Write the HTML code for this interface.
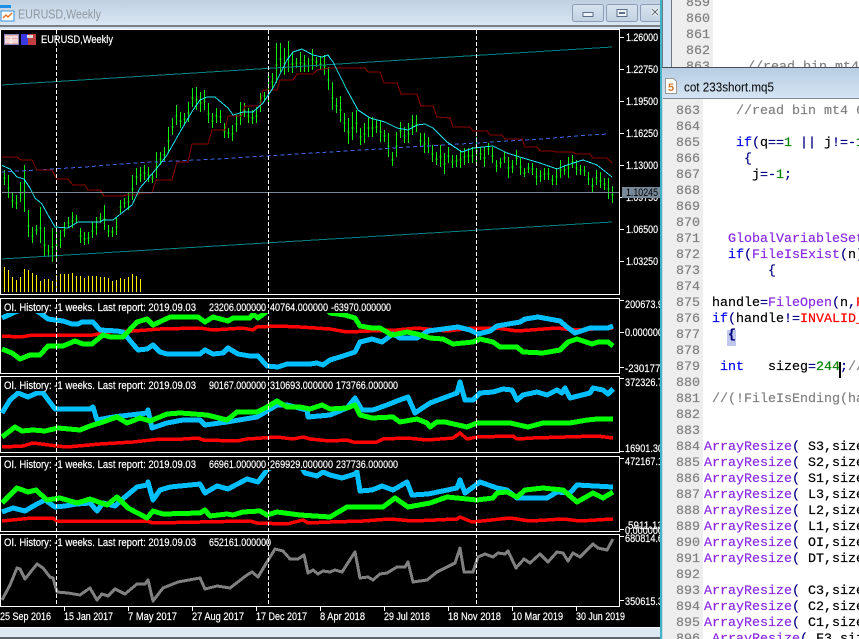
<!DOCTYPE html>
<html><head><meta charset="utf-8"><style>
html,body{margin:0;padding:0;background:#000;overflow:hidden}
svg{display:block}
.l{font-family:"Liberation Sans",sans-serif;font-size:11px;fill:#fff;stroke:#fff;stroke-width:.2}
.m{font-family:"Liberation Mono",monospace;font-size:13.33px;white-space:pre}
.n{fill:#808080;stroke:#808080;stroke-width:.2}.k{fill:#0000ff;stroke:#0000ff;stroke-width:.2}.f{fill:#8a2be2;stroke:#8a2be2;stroke-width:.2}.r{fill:#ff0000;stroke:#ff0000;stroke-width:.2}.g{fill:#008000;stroke:#008000;stroke-width:.2}.p{fill:#000080;stroke:#000080;stroke-width:.2}.b{fill:#000;stroke:#000;stroke-width:.2}
</style></head><body>
<svg width="859" height="639" viewBox="0 0 859 639" xmlns="http://www.w3.org/2000/svg">
<defs>
<linearGradient id="tb" x1="0" y1="0" x2="0" y2="1"><stop offset="0" stop-color="#bfd0e1"/><stop offset="1" stop-color="#d9e6f3"/></linearGradient>
<linearGradient id="tc" x1="0" y1="0" x2="0" y2="1"><stop offset="0" stop-color="#b7cde2"/><stop offset="1" stop-color="#d4e4f3"/></linearGradient>
<linearGradient id="bt" x1="0" y1="0" x2="0" y2="1"><stop offset="0" stop-color="#d6e2ee"/><stop offset="1" stop-color="#c3d2e2"/></linearGradient>
<clipPath id="cm"><rect x="2" y="30" width="617" height="264"/></clipPath>
<clipPath id="cr"><rect x="620" y="29" width="41" height="580"/></clipPath>
<clipPath id="ct"><rect x="664" y="0" width="195" height="67"/></clipPath>
</defs>
<rect width="859" height="639" fill="#000"/>
<!-- left window chrome -->
<rect x="0" y="0" width="661" height="25" fill="url(#tb)"/>
<rect x="0" y="25" width="661" height="2" fill="#7b7f84"/>
<rect x="0" y="27" width="661" height="2" fill="#d6e3f0"/>
<rect x="1" y="11" width="13" height="10" fill="#fff" stroke="#3a8fd8"/>
<rect x="0" y="5" width="11" height="3" fill="#1e8fe6"/>
<path d="M3 18l3-3 2 2 4-4" stroke="#e8742a" fill="none" stroke-width="1.5"/>
<text x="18" y="18.500" textLength="83" lengthAdjust="spacingAndGlyphs" style="font-family:'Liberation Sans',sans-serif;font-size:13px;fill:#8f989f">EURUSD,Weekly</text>
<rect x="572.500" y="4.500" width="31" height="17" rx="2" fill="url(#bt)" stroke="#8d9db8"/>
<rect x="583" y="12.500" width="10" height="4" fill="#eef3f8" stroke="#5c6f88"/>
<rect x="606.500" y="4.500" width="31" height="17" rx="2" fill="url(#bt)" stroke="#8d9db8"/>
<rect x="617" y="9.500" width="10" height="7" fill="#eef3f8" stroke="#5c6f88"/><rect x="619" y="12" width="6" height="2" fill="#5c6f88"/>
<rect x="640.500" y="4.500" width="24" height="17" rx="2" fill="url(#bt)" stroke="#8d9db8"/>
<path d="M652 9l6 6M658 9l-6 6" stroke="#fff" stroke-width="3"/><path d="M652 9l6 6M658 9l-6 6" stroke="#55606e" stroke-width="1"/>
<!-- chart frames -->
<g fill="none" stroke="#fff" shape-rendering="crispEdges">
<rect x="0.500" y="29.500" width="619" height="265"/>
<rect x="0.500" y="298.500" width="619" height="75"/>
<rect x="0.500" y="376.500" width="619" height="76"/>
<rect x="0.500" y="456.500" width="619" height="75"/>
<rect x="0.500" y="534.500" width="619" height="72"/>
</g>
<!-- legend icons -->
<rect x="4.500" y="34.500" width="14" height="10" fill="#e8b0b0" stroke="#8a88b8"/><path d="M5 37h13M11 37v7M5 40h13M5 42h13" stroke="#fff"/>
<rect x="21" y="34" width="7" height="11" fill="#3a3ae0"/><rect x="28" y="34" width="8" height="11" fill="#c04040"/><rect x="27" y="35" width="6" height="3" fill="#d8d8d8"/>
<text class="l" x="41" y="43" textLength="72" lengthAdjust="spacingAndGlyphs">EURUSD,Weekly</text>
<g clip-path="url(#cm)" shape-rendering="crispEdges">
<!-- volumes -->
<path stroke="#ffee00" fill="none" d="M4.500 267V292M8.500 270V292M12.500 277V292M16.500 280V292M20.500 277V292M24.500 269V292M28.500 270V292M32.500 273V292M36.500 275V292M40.500 281V292M44.500 279V292M48.500 279V292M52.500 281V292M56.500 275V292M60.500 274V292M64.500 274V292M68.500 274V292M72.500 273V292M76.500 276V292M80.500 276V292M84.500 278V292M88.500 276V292M92.500 276V292M96.500 276V292M100.500 277V292M104.500 277V292M108.500 278V292M112.500 281V292M116.500 280V292M120.500 278V292M124.500 279V292M128.500 277V292M132.500 274V292M136.500 276V292M140.500 279V292"/>
<!-- price bars -->
<path stroke="#0cf00c" fill="none" d="M4.500 170V185m-1-7h2M8.500 175V198m-1-10h2M12.500 192V208m-1-7h2M16.500 195V209m-1-6h2M20.500 182V202m-1-9h2M24.500 165V212m-1-20h2M28.500 210V237m-1-11h2M32.500 227V243m-1-7h2M36.500 225V235m-1-5h2M40.500 207V243m-1-15h2M44.500 227V257m-1-12h2M48.500 245V257m-1-6h2M52.500 228V262m-1-15h2M56.500 227V260m-1-14h2M60.500 230V248m-1-8h2M64.500 222V237m-1-7h2M68.500 217V228m-1-5h2M72.500 212V228m-1-7h2M76.500 215V223m-1-4h2M80.500 228V243m-1-7h2M84.500 232V245m-1-6h2M88.500 232V244m-1-6h2M92.500 222V238m-1-7h2M96.500 217V235m-1-8h2M100.500 213V223m-1-5h2M104.500 205V230m-1-11h2M108.500 225V237m-1-6h2M112.500 227V237m-1-5h2M116.500 217V235m-1-8h2M120.500 200V213m-1-6h2M124.500 198V208m-1-5h2M128.500 193V210m-1-8h2M132.500 175V200m-1-11h2M136.500 168V185m-1-8h2M140.500 167V182m-1-7h2M144.500 165V180m-1-7h2M148.500 167V182m-1-7h2M152.500 173V183m-1-5h2M156.500 152V178m-1-11h2M160.500 152V165m-1-6h2M164.500 147V162m-1-7h2M168.500 127V152m-1-11h2M172.500 118V135m-1-8h2M176.500 105V125m-1-9h2M180.500 112V128m-1-7h2M184.500 113V125m-1-6h2M188.500 102V122m-1-9h2M192.500 88V107m-1-9h2M196.500 87V110m-1-10h2M200.500 92V112m-1-9h2M204.500 90V110m-1-9h2M208.500 103V123m-1-9h2M212.500 113V128m-1-7h2M216.500 108V123m-1-7h2M220.500 110V123m-1-6h2M224.500 123V138m-1-7h2M228.500 128V138m-1-5h2M232.500 125V141m-1-7h2M236.500 115V132m-1-8h2M240.500 102V125m-1-10h2M244.500 103V117m-1-6h2M248.500 108V123m-1-7h2M252.500 110V124m-1-6h2M256.500 107V123m-1-7h2M260.500 93V112m-1-9h2M264.500 92V100m-1-4h2M268.500 75V102m-1-12h2M272.500 73V90m-1-8h2M276.500 43V83m-1-18h2M280.500 43V72m-1-13h2M284.500 48V75m-1-12h2M288.500 41V72m-1-14h2M292.500 53V73m-1-9h2M296.500 58V68m-1-5h2M300.500 52V72m-1-9h2M304.500 55V72m-1-8h2M308.500 58V72m-1-6h2M312.500 49V70m-1-10h2M316.500 57V67m-1-5h2M320.500 57V70m-1-6h2M324.500 55V75m-1-9h2M328.500 67V90m-1-10h2M332.500 82V110m-1-12h2M336.500 98V113m-1-7h2M340.500 96V122m-1-12h2M344.500 113V132m-1-9h2M348.500 118V144m-1-12h2M352.500 112V140m-1-12h2M356.500 110V133m-1-10h2M360.500 128V145m-1-8h2M364.500 123V143m-1-9h2M368.500 118V137m-1-9h2M372.500 117V137m-1-9h2M376.500 120V133m-1-6h2M380.500 120V142m-1-10h2M384.500 130V142m-1-6h2M388.500 133V157m-1-11h2M392.500 152V166m-1-6h2M396.500 132V157m-1-11h2M400.500 122V138m-1-7h2M404.500 127V143m-1-7h2M408.500 123V143m-1-9h2M412.500 115V135m-1-9h2M416.500 115V132m-1-8h2M420.500 133V147m-1-6h2M424.500 133V153m-1-9h2M428.500 137V153m-1-7h2M432.500 145V162m-1-8h2M436.500 152V165m-1-6h2M440.500 145V167m-1-10h2M444.500 153V174m-1-10h2M448.500 147V163m-1-7h2M452.500 155V168m-1-6h2M456.500 155V167m-1-6h2M460.500 150V168m-1-8h2M464.500 148V165m-1-8h2M468.500 148V163m-1-7h2M472.500 147V163m-1-7h2M476.500 137V163m-1-12h2M480.500 147V160m-1-6h2M484.500 147V167m-1-9h2M488.500 143V155m-1-6h2M492.500 147V163m-1-7h2M496.500 160V172m-1-6h2M500.500 158V168m-1-5h2M504.500 152V163m-1-5h2M508.500 157V178m-1-10h2M512.500 160V173m-1-6h2M516.500 150V165m-1-7h2M520.500 158V175m-1-8h2M524.500 168V177m-1-4h2M528.500 163V173m-1-5h2M532.500 163V175m-1-6h2M536.500 168V185m-1-8h2M540.500 170V182m-1-6h2M544.500 168V180m-1-6h2M548.500 168V180m-1-6h2M552.500 175V185m-1-5h2M556.500 168V185m-1-8h2M560.500 160V178m-1-8h2M564.500 165V175m-1-5h2M568.500 157V178m-1-10h2M572.500 155V168m-1-6h2M576.500 160V175m-1-7h2M580.500 165V175m-1-5h2M584.500 166V176m-1-5h2M588.500 172V185m-1-6h2M592.500 178V192m-1-6h2M596.500 170V185m-1-7h2M600.500 172V188m-1-7h2M604.500 178V190m-1-6h2M608.500 178V199m-1-10h2M612.500 186V203m-1-8h2"/>
<!-- teal channel -->
<polyline points="1,85 612,47" stroke="#008080" fill="none" stroke-width="1"/>
<polyline points="1,259 612,222" stroke="#008080" fill="none" stroke-width="1"/>
<!-- blue dashed -->
<polyline points="1,172 37,170 85,167 133,163 217,159 313,153 330,152 410,147 493,142 540,139 590,135 609,134" stroke="#3f66ea" stroke-dasharray="4 3" fill="none"/>
<!-- dark red -->
<polyline points="1,157 17,157 21,160 32,160 37,170 52,170 57,179 68,179 73,185 85,185 88,190 100,190 104,196 122,196 127,195 137,195 140,193 152,193 156,180 172,180 177,162 188,162 192,144 208,144 212,130 225,130 228,116 242,116 245,106 260,106 263,90 277,90 280,80 293,80 297,74 313,74 317,70 330,68 347,68 365,68 368,72 380,72 384,83 397,83 401,94 417,94 421,106 433,106 437,117 450,118 453,127 470,127 473,131 487,131 490,135 502,135 505,139 522,139 525,147 537,147 540,151 553,151 556,152 573,152 576,154 590,154 593,158 607,158 612,163" stroke="#8b0000" fill="none"/>
<!-- cyan MA -->
<polyline points="1,165 10,169 17,177 24,179 30,188 35,198 42,204 48,215 55,227 68,228 78,222 87,222 100,222 103,220 113,220 118,216 132,205 140,188 157,168 167,155 180,132 193,110 200,100 207,97 215,97 228,108 233,115 240,113 243,112 253,112 263,103 273,88 287,60 293,52 302,49 313,55 322,57 328,55 330,58 333,62 347,90 358,110 370,118 385,122 397,128 408,130 417,125 425,124 433,128 447,142 462,152 473,148 493,146 507,153 523,158 540,163 557,169 567,165 583,160 597,165 612,177" stroke="#1fe6f0" fill="none"/>
<rect x="2" y="192" width="617" height="1" fill="#778899"/>
</g>
<!-- sub 1 -->
<g fill="none" stroke-linejoin="round" shape-rendering="crispEdges">
<polyline stroke="#ff0000" stroke-width="3.500" points="2,336 20,337 33,335 93,335 110,332 133,331 160,329 200,328 213,330 243,328 253,330 257,327 277,326 300,327 330,329 347,332 370,331 397,330 417,328 447,331 473,328 497,328 517,331 557,328 573,330 613,328"/>
<polyline stroke="#00bfff" stroke-width="5" points="2,318 13,313 20,310 35,310 40,313 48,319 55,320 63,321 72,324 78,324 82,322 93,322 100,330 117,331 123,332 132,343 138,350 147,349 153,345 160,352 167,354 200,354 205,350 213,354 223,353 228,348 238,354 250,356 258,356 267,366 278,367 287,364 310,364 317,363 323,365 330,360 343,356 355,352 360,342 372,339 382,342 393,334 400,338 417,338 428,331 458,327 470,330 478,334 490,331 497,326 520,322 525,319 538,317 560,321 567,327 575,333 590,328 608,328 613,326"/>
<polyline stroke="#00ff00" stroke-width="5" points="2,349 12,353 20,359 30,355 40,355 48,346 63,346 75,341 83,344 92,344 103,335 110,337 123,337 137,322 147,319 153,325 170,317 198,317 205,322 213,317 228,321 233,318 250,318 253,314 258,318 265,313 270,305 325,305 330,313 345,315 355,318 360,326 372,328 380,328 392,335 407,332 417,334 430,338 443,339 453,344 473,342 480,339 493,342 500,347 517,347 523,352 543,353 560,350 568,342 577,339 592,344 598,342 608,342 613,346"/>
<rect x="2" y="299" width="392" height="14" fill="#000"/>
</g>
<!-- sub 2 -->
<g fill="none" stroke-linejoin="round" shape-rendering="crispEdges">
<polyline stroke="#ff0000" stroke-width="3.500" points="2,447 23,446 33,443 57,446 67,447 100,444 133,442 160,439 183,439 198,438 203,440 237,441 247,439 277,437 293,439 303,437 310,439 330,441 347,440 353,442 377,442 383,439 407,438 427,440 453,438 460,433 467,439 477,437 513,436 517,439 533,438 597,436 613,438"/>
<polyline stroke="#00bfff" stroke-width="5" points="2,413 10,400 18,393 28,397 37,393 43,393 55,409 90,409 93,407 97,420 113,417 147,413 148,410 152,428 167,423 183,420 200,420 205,425 227,422 257,417 277,405 287,405 307,410 308,417 330,415 347,408 355,398 362,410 373,410 387,405 397,401 408,397 415,413 430,403 457,393 460,382 465,400 473,400 480,393 493,392 503,389 512,390 517,400 523,395 537,392 547,395 557,390 562,393 565,388 570,398 590,393 593,388 603,390 608,394 613,389"/>
<polyline stroke="#00ff00" stroke-width="5" points="2,437 15,427 22,431 33,430 45,431 58,428 80,430 90,426 103,422 117,417 127,423 140,418 150,421 167,414 180,413 207,415 227,420 237,412 257,412 267,407 277,401 287,407 300,407 310,409 322,405 330,409 347,408 355,405 360,415 372,418 393,417 400,422 417,419 427,423 430,427 437,422 445,422 467,427 477,423 510,423 528,427 543,423 570,423 587,420 597,419 613,419"/>
<rect x="2" y="377" width="396" height="14" fill="#000"/>
</g>
<!-- sub 3 -->
<g fill="none" stroke-linejoin="round" shape-rendering="crispEdges">
<polyline stroke="#ff0000" stroke-width="3.500" points="2,521 32,518 53,518 57,521 93,521 147,521 153,523 200,522 250,521 257,523 287,524 303,520 308,523 330,522 363,521 390,519 413,521 457,519 460,517 472,522 510,518 530,521 563,519 580,521 613,519"/>
<polyline stroke="#00bfff" stroke-width="5" points="2,512 13,508 25,511 37,504 45,500 55,507 65,506 77,504 90,503 97,511 103,503 115,506 125,497 137,487 147,485 148,482 153,500 160,490 170,487 200,484 205,493 217,486 228,489 247,479 258,482 267,470 275,465 300,465 305,473 317,476 323,472 330,475 342,478 355,474 357,472 360,491 372,490 382,486 393,490 407,482 412,495 428,494 457,488 460,480 465,493 480,482 497,488 507,490 517,498 547,498 557,492 570,493 577,485 613,487"/>
<polyline stroke="#00ff00" stroke-width="5" points="2,503 17,488 28,492 36,490 47,500 60,498 77,503 90,499 107,505 117,497 128,508 147,518 153,511 163,514 200,513 205,510 210,516 227,514 233,515 243,512 260,511 267,515 277,512 300,515 330,517 347,507 383,507 395,498 408,507 430,503 447,497 477,500 493,498 497,493 507,492 517,497 525,490 543,488 563,490 577,502 593,493 603,498 613,492"/>
<rect x="2" y="457" width="397" height="13" fill="#000"/>
</g>
<!-- sub 4 -->
<polyline fill="none" stroke="#808080" stroke-width="3" stroke-linejoin="round" shape-rendering="crispEdges" points="2,600 10,585 17,568 20,569 25,579 37,564 43,568 50,577 53,578 57,592 68,593 80,595 90,588 97,600 102,594 108,596 115,589 125,594 137,584 145,584 148,580 153,601 163,588 178,582 200,578 205,589 217,586 230,588 247,575 252,572 258,577 267,562 275,549 283,551 290,559 298,559 304,555 308,573 313,570 318,574 323,571 330,572 335,570 342,572 355,552 360,578 368,577 373,580 380,574 387,573 397,567 405,567 408,562 413,582 427,580 437,572 455,563 460,548 464,572 473,572 478,557 485,554 493,557 498,553 505,554 508,551 516,568 524,559 530,563 540,554 548,562 557,552 563,553 568,561 573,553 580,557 593,544 598,548 607,550 613,539"/>
<!-- dashed separators -->
<g stroke="#fff" stroke-dasharray="4 2" shape-rendering="crispEdges">
<path d="M56.500 30V294M56.500 298V374M56.500 376V453M56.500 456V532M56.500 534V607"/>
<path d="M268.500 30V294M268.500 298V374M268.500 376V453M268.500 456V532M268.500 534V607"/>
<path d="M476.500 30V294M476.500 298V374M476.500 376V453M476.500 456V532M476.500 534V607"/>
</g>
<!-- sub labels -->
<g class="l">
<text class="l" x="4" y="311" textLength="192" lengthAdjust="spacingAndGlyphs">OI. History: -1 weeks. Last report: 2019.09.03</text>
<text class="l" x="209" y="311" textLength="57" lengthAdjust="spacingAndGlyphs">23206.000000</text>
<text class="l" x="270" y="311" textLength="58" lengthAdjust="spacingAndGlyphs">40764.000000</text>
<text class="l" x="331" y="311" textLength="60" lengthAdjust="spacingAndGlyphs">-63970.000000</text>
<text class="l" x="4" y="389" textLength="192" lengthAdjust="spacingAndGlyphs">OI. History: -1 weeks. Last report: 2019.09.03</text>
<text class="l" x="209" y="389" textLength="57" lengthAdjust="spacingAndGlyphs">90167.000000</text>
<text class="l" x="270" y="389" textLength="63" lengthAdjust="spacingAndGlyphs">310693.000000</text>
<text class="l" x="336" y="389" textLength="62" lengthAdjust="spacingAndGlyphs">173766.000000</text>
<text class="l" x="4" y="468" textLength="192" lengthAdjust="spacingAndGlyphs">OI. History: -1 weeks. Last report: 2019.09.03</text>
<text class="l" x="209" y="468" textLength="57" lengthAdjust="spacingAndGlyphs">66961.000000</text>
<text class="l" x="270" y="468" textLength="63" lengthAdjust="spacingAndGlyphs">269929.000000</text>
<text class="l" x="336" y="468" textLength="62" lengthAdjust="spacingAndGlyphs">237736.000000</text>
<text class="l" x="4" y="546" textLength="192" lengthAdjust="spacingAndGlyphs">OI. History: -1 weeks. Last report: 2019.09.03</text>
<text class="l" x="209" y="546" textLength="62" lengthAdjust="spacingAndGlyphs">652161.000000</text>
</g>
<!-- right axis -->
<g stroke="#fff" shape-rendering="crispEdges">
<path d="M620 37.500h4M620 69.500h4M620 101.500h4M620 133.500h4M620 165.500h4M620 197.500h4M620 229.500h4M620 261.500h4M620 300.500h4M620 332.500h4M620 367.500h4M620 378.500h4M620 451.500h4M620 458.500h4M620 529.500h4M620 536.500h4M620 600.500h4"/>
</g>
<g clip-path="url(#cr)">
<text class="l" x="626" y="41" textLength="32" lengthAdjust="spacingAndGlyphs">1.26000</text>
<text class="l" x="626" y="73" textLength="32" lengthAdjust="spacingAndGlyphs">1.22750</text>
<text class="l" x="626" y="105" textLength="32" lengthAdjust="spacingAndGlyphs">1.19500</text>
<text class="l" x="626" y="137" textLength="32" lengthAdjust="spacingAndGlyphs">1.16250</text>
<text class="l" x="626" y="169" textLength="32" lengthAdjust="spacingAndGlyphs">1.13000</text>
<text class="l" x="626" y="201" textLength="32" lengthAdjust="spacingAndGlyphs">1.09750</text>
<rect x="622" y="187" width="38" height="11" fill="#778899"/>
<text x="626" y="196" textLength="32" lengthAdjust="spacingAndGlyphs" style="font-family:'Liberation Sans',sans-serif;font-size:11px;fill:#000">1.10245</text>
<text class="l" x="626" y="233" textLength="32" lengthAdjust="spacingAndGlyphs">1.06500</text>
<text class="l" x="626" y="265" textLength="32" lengthAdjust="spacingAndGlyphs">1.03250</text>
<text class="l" x="625" y="308" textLength="38" lengthAdjust="spacingAndGlyphs">200673.9</text>
<text class="l" x="625" y="336" textLength="38" lengthAdjust="spacingAndGlyphs">0.000000</text>
<text class="l" x="625" y="372" textLength="38" lengthAdjust="spacingAndGlyphs">-230177.</text>
<text class="l" x="625" y="386" textLength="38" lengthAdjust="spacingAndGlyphs">372326.7</text>
<text class="l" x="625" y="452" textLength="38" lengthAdjust="spacingAndGlyphs">16901.30</text>
<text class="l" x="625" y="465" textLength="38" lengthAdjust="spacingAndGlyphs">472167.1</text>
<text class="l" x="628" y="529" textLength="35" lengthAdjust="spacingAndGlyphs">5911.13</text>
<text class="l" x="625" y="534" textLength="38" lengthAdjust="spacingAndGlyphs">0.000000</text>
<text class="l" x="625" y="542" textLength="38" lengthAdjust="spacingAndGlyphs">680814.6</text>
<text class="l" x="625" y="605" textLength="38" lengthAdjust="spacingAndGlyphs">350615.3</text>
</g>
<!-- date axis -->
<path stroke="#fff" shape-rendering="crispEdges" d="M64.500 607v4M128.500 607v4M192.500 607v4M256.500 607v4M320.500 607v4M384.500 607v4M448.500 607v4M512.500 607v4M576.500 607v4"/>
<text class="l" x="0" y="620" textLength="51" lengthAdjust="spacingAndGlyphs">25 Sep 2016</text>
<text class="l" x="64" y="620" textLength="49" lengthAdjust="spacingAndGlyphs">15 Jan 2017</text>
<text class="l" x="128" y="620" textLength="49" lengthAdjust="spacingAndGlyphs">7 May 2017</text>
<text class="l" x="192" y="620" textLength="52" lengthAdjust="spacingAndGlyphs">27 Aug 2017</text>
<text class="l" x="256" y="620" textLength="51" lengthAdjust="spacingAndGlyphs">17 Dec 2017</text>
<text class="l" x="320" y="620" textLength="45" lengthAdjust="spacingAndGlyphs">8 Apr 2018</text>
<text class="l" x="384" y="620" textLength="46" lengthAdjust="spacingAndGlyphs">29 Jul 2018</text>
<text class="l" x="448" y="620" textLength="53" lengthAdjust="spacingAndGlyphs">18 Nov 2018</text>
<text class="l" x="512" y="620" textLength="51" lengthAdjust="spacingAndGlyphs">10 Mar 2019</text>
<text class="l" x="576" y="620" textLength="49" lengthAdjust="spacingAndGlyphs">30 Jun 2019</text>
<!-- bottom strip -->
<rect x="0" y="628" width="661" height="9" fill="#dce8f4"/>
<rect x="0" y="627" width="661" height="1" fill="#f4f8fc"/>
<rect x="0" y="637" width="661" height="2" fill="#5f6368"/>
<!-- right editor, top -->
<rect x="660" y="0" width="199" height="639" fill="#fff"/>
<rect x="660" y="0" width="2" height="639" fill="#3fb4c6"/>
<rect x="662" y="0" width="1" height="67" fill="#6a7a88"/>
<rect x="663" y="0" width="9" height="67" fill="#d5e4f3"/>
<rect x="671" y="0" width="1" height="67" fill="#6f7880"/>
<rect x="672" y="0" width="41" height="67" fill="#eeeeee"/>
<g clip-path="url(#ct)" class="m">
<text class="m n" x="686" y="6">859</text>
<text class="m n" x="686" y="22">860</text>
<text class="m n" x="686" y="38">861</text>
<text class="m n" x="686" y="54">862</text>
<text class="m n" x="686" y="70">863</text>
<text class="m n" x="747" y="70">//read bin mt4</text>
</g>
<rect x="662" y="67" width="197" height="1" fill="#4a4f55"/>
<rect x="663" y="68" width="196" height="30" fill="url(#tc)"/>
<rect x="663" y="98" width="196" height="1" fill="#7e8a96"/>
<rect x="663" y="99" width="40" height="540" fill="#eeeeee"/>
<rect x="662" y="68" width="1" height="571" fill="#c8d8e8"/>
<path d="M665.500 78.500h8l3 3v12h-11z" fill="#fff" stroke="#9a9a9a"/>
<text x="668" y="91" style="font-family:'Liberation Sans',sans-serif;font-size:11px;font-weight:bold;fill:#d07a30">5</text>
<text x="684" y="91.500" textLength="90" lengthAdjust="spacingAndGlyphs" style="font-family:'Liberation Sans',sans-serif;font-size:13px;fill:#000">cot 233short.mq5</text>
<!-- line numbers -->
<g class="m">
<text class="m n" x="676" y="114">863</text><text class="m n" x="676" y="130">864</text><text class="m n" x="676" y="146">865</text><text class="m n" x="676" y="162">866</text><text class="m n" x="676" y="178">867</text><text class="m n" x="676" y="194">868</text><text class="m n" x="676" y="210">869</text><text class="m n" x="676" y="226">870</text><text class="m n" x="676" y="242">871</text><text class="m n" x="676" y="258">872</text><text class="m n" x="676" y="274">873</text><text class="m n" x="676" y="290">874</text><text class="m n" x="676" y="306">875</text><text class="m n" x="676" y="322">876</text><text class="m n" x="676" y="338">877</text><text class="m n" x="676" y="354">878</text><text class="m n" x="676" y="370">879</text><text class="m n" x="676" y="386">880</text><text class="m n" x="676" y="402">881</text><text class="m n" x="676" y="418">882</text><text class="m n" x="676" y="434">883</text><text class="m n" x="676" y="450">884</text><text class="m n" x="676" y="466">885</text><text class="m n" x="676" y="482">886</text><text class="m n" x="676" y="498">887</text><text class="m n" x="676" y="514">888</text><text class="m n" x="676" y="530">889</text><text class="m n" x="676" y="546">890</text><text class="m n" x="676" y="562">891</text><text class="m n" x="676" y="578">892</text><text class="m n" x="676" y="594">893</text><text class="m n" x="676" y="610">894</text><text class="m n" x="676" y="626">895</text><text class="m n" x="676" y="642">896</text>
</g>
<!-- code -->
<rect x="727" y="330" width="9" height="16" fill="#c0c8f0"/>
<g class="m" xml:space="preserve">
<text class="m n" x="736" y="114">//read bin mt4 6</text>
<text class="m" x="736" y="146"><tspan class="k">if</tspan><tspan class="p">(</tspan><tspan class="b">q</tspan><tspan class="p">==</tspan><tspan class="g">1</tspan><tspan class="p"> || </tspan><tspan class="b">j</tspan><tspan class="p">!=-</tspan><tspan class="g">1</tspan></text>
<text class="m p" x="744" y="162">{</text>
<text class="m" x="752" y="178"><tspan class="b">j</tspan><tspan class="p">=-</tspan><tspan class="g">1</tspan><tspan class="p">;</tspan></text>
<text class="m f" x="728" y="242">GlobalVariableSet</text>
<text class="m" x="728" y="258"><tspan class="k">if</tspan><tspan class="p">(</tspan><tspan class="f">FileIsExist</tspan><tspan class="p">(</tspan><tspan class="b">n</tspan><tspan class="p">)</tspan></text>
<text class="m p" x="768" y="274">{</text>
<text class="m" x="712" y="306"><tspan class="b">handle</tspan><tspan class="p">=</tspan><tspan class="f">FileOpen</tspan><tspan class="p">(</tspan><tspan class="b">n</tspan><tspan class="p">,</tspan><tspan class="r">F</tspan></text>
<text class="m" x="712" y="322"><tspan class="k">if</tspan><tspan class="p">(</tspan><tspan class="b">handle</tspan><tspan class="p">!=</tspan><tspan class="r">INVALID_</tspan></text>
<text class="m p" x="728" y="338" style="font-weight:bold">{</text>
<text class="m k" x="720" y="370">int</text>
<text class="m" x="768" y="370"><tspan class="b">sizeg</tspan><tspan class="p">=</tspan><tspan class="g">244</tspan><tspan class="p">;</tspan><tspan class="n">//</tspan></text>
<text class="m n" x="712" y="402">//(!FileIsEnding(ha</text>
<text class="m" x="704" y="450"><tspan class="f">ArrayResize</tspan><tspan class="p">( </tspan><tspan class="b">S3,size</tspan></text>
<text class="m" x="704" y="466"><tspan class="f">ArrayResize</tspan><tspan class="p">( </tspan><tspan class="b">S2,size</tspan></text>
<text class="m" x="704" y="482"><tspan class="f">ArrayResize</tspan><tspan class="p">( </tspan><tspan class="b">S1,size</tspan></text>
<text class="m" x="704" y="498"><tspan class="f">ArrayResize</tspan><tspan class="p">( </tspan><tspan class="b">L3,size</tspan></text>
<text class="m" x="704" y="514"><tspan class="f">ArrayResize</tspan><tspan class="p">( </tspan><tspan class="b">L2,size</tspan></text>
<text class="m" x="704" y="530"><tspan class="f">ArrayResize</tspan><tspan class="p">( </tspan><tspan class="b">L1,size</tspan></text>
<text class="m" x="704" y="546"><tspan class="f">ArrayResize</tspan><tspan class="p">( </tspan><tspan class="b">OI,size</tspan></text>
<text class="m" x="704" y="562"><tspan class="f">ArrayResize</tspan><tspan class="p">( </tspan><tspan class="b">DT,size</tspan></text>
<text class="m" x="704" y="594"><tspan class="f">ArrayResize</tspan><tspan class="p">( </tspan><tspan class="b">C3,size</tspan></text>
<text class="m" x="704" y="610"><tspan class="f">ArrayResize</tspan><tspan class="p">( </tspan><tspan class="b">C2,size</tspan></text>
<text class="m" x="704" y="626"><tspan class="f">ArrayResize</tspan><tspan class="p">( </tspan><tspan class="b">C1,size</tspan></text>
<text class="m" x="712" y="642"><tspan class="f">ArrayResize</tspan><tspan class="p">( </tspan><tspan class="b">F3,size</tspan></text>
</g>
<rect x="839" y="362" width="2" height="16" fill="#000"/>
</svg>
</body></html>
